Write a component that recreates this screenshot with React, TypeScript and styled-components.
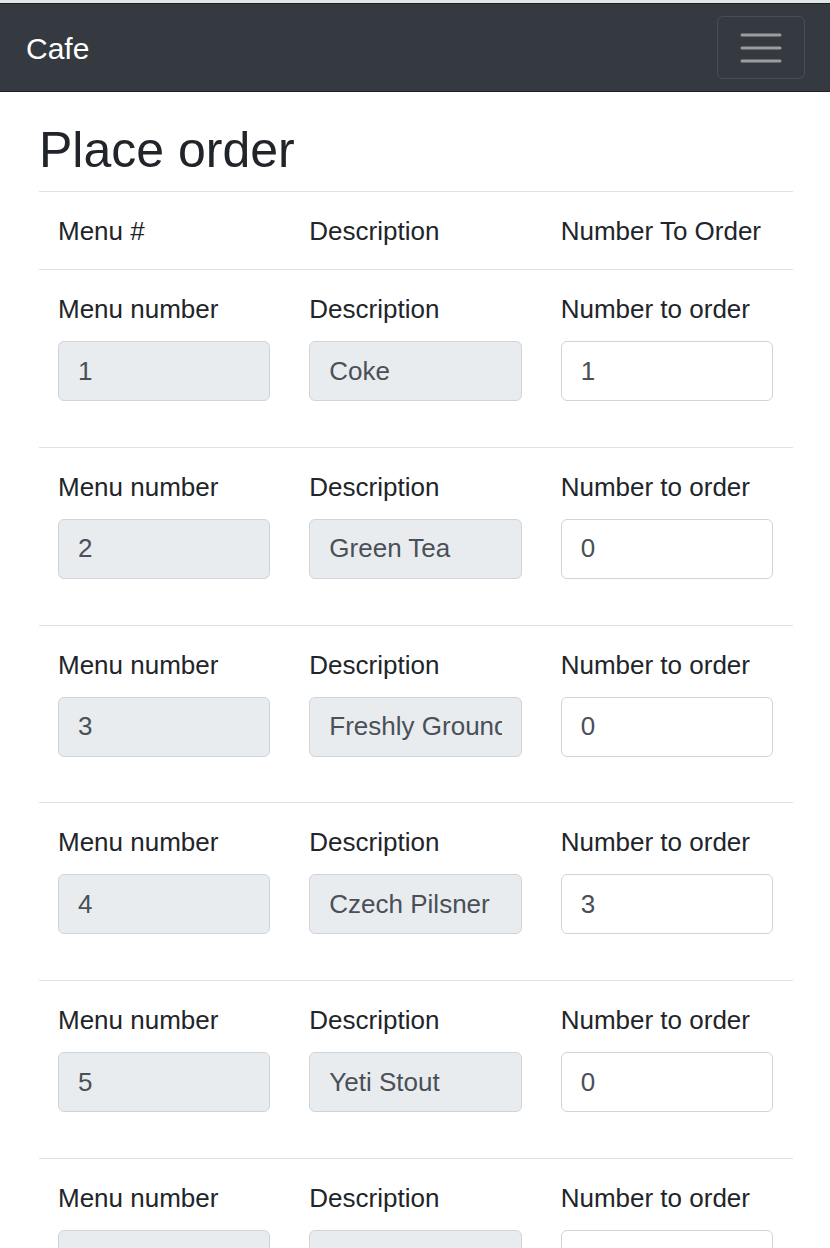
import React from "react";
import styled, { createGlobalStyle } from "styled-components";

const GlobalStyle = createGlobalStyle`
  body {
    margin: 0;
    background: #fff;
    font-family: "Liberation Sans", Arial, sans-serif;
    color: #212529;
  }
`;

type Item = { id: number; description: string; qty: string };

const ITEMS: Item[] = [
  { id: 1, description: "Coke", qty: "1" },
  { id: 2, description: "Green Tea", qty: "0" },
  { id: 3, description: "Freshly Ground Coffee", qty: "0" },
  { id: 4, description: "Czech Pilsner", qty: "3" },
  { id: 5, description: "Yeti Stout", qty: "0" },
  { id: 6, description: "", qty: "" },
];

const Page = styled.div`
  padding-top: 3px;
  background: #e3e5e7;
`;

const Navbar = styled.nav`
  height: 87px;
  background: #343a40;
  border-top: 1px solid #1d2124;
  border-bottom: 1px solid #1d2124;
  display: flex;
  align-items: center;
  justify-content: space-between;
  padding: 0 25px 0 26px;
`;

const Brand = styled.a`
  color: #fff;
  font-size: 30px;
  line-height: 1;
  margin-top: 2px;
  text-decoration: none;
`;

const Toggler = styled.button`
  width: 88px;
  height: 63px;
  background: transparent;
  border: 1px solid rgba(255, 255, 255, 0.1);
  border-radius: 6px;
  display: flex;
  align-items: center;
  justify-content: center;
  padding: 0;
`;

const Main = styled.main`
  background: #fff;
  padding: 28px 37px 0 39px;
`;

const Heading = styled.h1`
  margin: 0 0 11px;
  font-size: 50px;
  line-height: 60px;
  font-weight: 500;
  color: #212529;
`;

const Row = styled.div`
  display: grid;
  grid-template-columns: repeat(3, 1fr);
  border-top: 1px solid #dee2e6;
`;

const HeadCell = styled.div`
  padding: 20px 20px 19px 19px;
  font-size: 26px;
  line-height: 38px;
  white-space: nowrap;
`;

const Cell = styled.div`
  padding: 20px 20px 45.8px 19px;
  display: flex;
  flex-direction: column;
`;

const Label = styled.label`
  font-size: 26px;
  line-height: 38px;
  margin-bottom: 13px;
  white-space: nowrap;
`;

const Field = styled.input<{ $readOnly?: boolean }>`
  box-sizing: border-box;
  width: 100%;
  height: 60px;
  padding: 0 19px;
  font-family: inherit;
  font-size: 26px;
  color: #495057;
  background: ${(p) => (p.$readOnly ? "#e9ecef" : "#fff")};
  border: 1px solid #ced4da;
  border-radius: 6px;
  outline: none;
`;

const MenuIcon = () => (
  <svg width="44" height="36" viewBox="0 0 44 36">
    <g stroke="rgba(255,255,255,0.5)" strokeWidth="3" strokeLinecap="round">
      <line x1="3" y1="5" x2="41" y2="5" />
      <line x1="3" y1="18" x2="41" y2="18" />
      <line x1="3" y1="31" x2="41" y2="31" />
    </g>
  </svg>
);

export default function App() {
  return (
    <Page>
      <GlobalStyle />
      <Navbar>
        <Brand href="#">Cafe</Brand>
        <Toggler aria-label="Toggle navigation">
          <MenuIcon />
        </Toggler>
      </Navbar>
      <Main>
        <Heading>Place order</Heading>
        <Row>
          <HeadCell>Menu #</HeadCell>
          <HeadCell>Description</HeadCell>
          <HeadCell>Number To Order</HeadCell>
        </Row>
        {ITEMS.map((item) => (
          <Row key={item.id}>
            <Cell>
              <Label>Menu number</Label>
              <Field $readOnly readOnly value={item.description ? String(item.id) : ""} />
            </Cell>
            <Cell>
              <Label>Description</Label>
              <Field $readOnly readOnly value={item.description} />
            </Cell>
            <Cell>
              <Label>Number to order</Label>
              <Field type="text" defaultValue={item.qty} />
            </Cell>
          </Row>
        ))}
      </Main>
    </Page>
  );
}
